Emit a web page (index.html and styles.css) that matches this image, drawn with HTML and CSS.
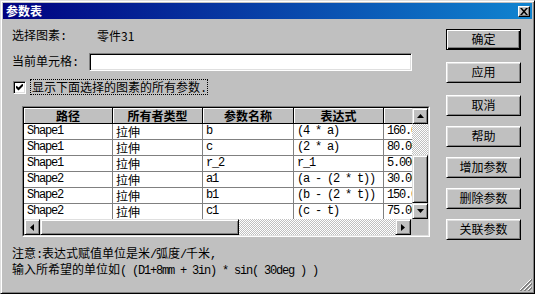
FILE: index.html
```html
<!DOCTYPE html>
<html lang="zh-CN">
<head>
<meta charset="utf-8">
<title>参数表</title>
<link rel="stylesheet" href="styles.css">
</head>
<body>
<div class="window">
  <div class="titlebar">
    <span class="title">参数表</span>
    <span class="close"><svg width="8" height="7" viewBox="0 0 8 7"><path d="M0 0H2L4 2.3L6 0H8L5 3.5L8 7H6L4 4.7L2 7H0L3 3.5Z" fill="#000"/></svg></span>
  </div>
  <div class="content">
    <div class="main">
      <div class="row r-sel"><span class="lbl w-sel">选择图素<span class="m">:</span></span><span>零件31</span></div>
      <div class="row r-cell"><span class="lbl w-cell">当前单元格<span class="m">:</span></span><div class="field"></div></div>
      <div class="row r-chk">
        <span class="checkbox"><svg width="7" height="7" viewBox="0 0 7 7"><path d="M0 2.5L2.5 5L7 0.5" stroke="#000" stroke-width="2" fill="none"/></svg></span>
        <span class="focus">显示下面选择的图素的所有参数<span class="m">.</span></span>
      </div>
      <div class="grid">
        <div class="grid-in">
          <div class="grid-body">
            <div class="cells">
              <div class="trow thead"><div>路径</div><div>所有者类型</div><div>参数名称</div><div>表达式</div><div></div></div>
              <div class="trow"><div class="m">Shape1</div><div>拉伸</div><div class="m">b</div><div class="m">(4 * a)</div><div class="m">160.000</div></div>
              <div class="trow"><div class="m">Shape1</div><div>拉伸</div><div class="m">c</div><div class="m">(2 * a)</div><div class="m">80.000</div></div>
              <div class="trow"><div class="m">Shape1</div><div>拉伸</div><div class="m">r_2</div><div class="m">r_1</div><div class="m">5.000</div></div>
              <div class="trow"><div class="m">Shape2</div><div>拉伸</div><div class="m">a1</div><div class="m">(a - (2 * t))</div><div class="m">30.000</div></div>
              <div class="trow"><div class="m">Shape2</div><div>拉伸</div><div class="m">b1</div><div class="m">(b - (2 * t))</div><div class="m">150.000</div></div>
              <div class="trow"><div class="m">Shape2</div><div>拉伸</div><div class="m">c1</div><div class="m">(c - t)</div><div class="m">75.000</div></div>
            </div>
            <div class="vscroll">
              <span class="sbtn"><svg width="7" height="4" viewBox="0 0 7 4"><path d="M3.5 0L7 4H0Z" fill="#000"/></svg></span>
              <span class="track vtrack"></span>
              <span class="thumb vthumb"></span>
              <span class="sbtn"><svg width="7" height="4" viewBox="0 0 7 4"><path d="M0 0H7L3.5 4Z" fill="#000"/></svg></span>
            </div>
          </div>
          <div class="hrow">
            <div class="hscroll">
              <span class="sbtn"><svg width="4" height="7" viewBox="0 0 4 7"><path d="M4 0V7L0 3.5Z" fill="#000"/></svg></span>
              <span class="thumb hthumb"></span>
              <span class="track htrack"></span>
              <span class="sbtn"><svg width="4" height="7" viewBox="0 0 4 7"><path d="M0 0V7L4 3.5Z" fill="#000"/></svg></span>
            </div>
            <div class="corner"></div>
          </div>
        </div>
      </div>
      <div class="note">
        <div>注意<span class="m">:</span>表达式赋值单位是米<span class="m">/</span>弧度<span class="m">/</span>千米<span class="m">,</span></div>
        <div>输入所希望的单位如<span class="m">( (D1+8mm + 3in) * sin( 30deg ) )</span></div>
      </div>
    </div>
    <div class="buttons">
      <div class="btn default">确定</div>
      <div class="btn">应用</div>
      <div class="btn">取消</div>
      <div class="btn gap2">帮助</div>
      <div class="btn gap2">增加参数</div>
      <div class="btn gap2">删除参数</div>
      <div class="btn gap2">关联参数</div>
    </div>
  </div>
  <div class="grip"><svg width="12" height="12" viewBox="0 0 12 12">
    <path d="M11 0L0 11M11 4L4 11M11 8L8 11" stroke="#fff" stroke-width="1"/>
    <path d="M12 0L0 12M12 1L1 12M12 4L4 12M12 5L5 12M12 8L8 12M12 9L9 12" stroke="#808080" stroke-width="1"/>
  </svg></div>
</div>
</body>
</html>
```
FILE: styles.css
```css
* { box-sizing: border-box; }
html, body { margin: 0; padding: 0; }
body {
  width: 535px; height: 294px; overflow: hidden;
  background: #c0c0c0;
  font: 12px/15px "Noto Sans CJK SC", sans-serif;
  color: #000;
}
.m { font-family: "Liberation Mono", monospace; font-size: 12px; letter-spacing: -1.2px; }

.window {
  position: relative;
  width: 535px; height: 294px;
  background: #c0c0c0;
  border: 1px solid;
  border-color: #dfdfdf #000 #000 #dfdfdf;
  box-shadow: inset 1px 1px #fff, inset -1px -1px #808080;
  padding: 2px;
  display: flex; flex-direction: column;
}
.titlebar {
  height: 16px;
  background: linear-gradient(to right, #000080, #1084d0);
  display: flex; align-items: center; justify-content: space-between;
  padding: 0 2px 0 3px;
}
.title { color: #fff; font-weight: 700; font-size: 12px; line-height: 16px; }
.close {
  width: 12px; height: 11px;
  background: #c0c0c0;
  border: 1px solid; border-color: #fff #000 #000 #fff;
  box-shadow: inset -1px -1px #808080;
  display: flex; align-items: center; justify-content: center;
}

.content { flex: 1; display: flex; padding: 9px 11px 0 9px; }
.main { flex: 1; display: flex; flex-direction: column; }

.row { display: flex; align-items: center; }
.r-sel { height: 15px; }
.w-sel { width: 85px; }
.r-cell { height: 18px; margin-top: 10px; }
.w-cell { width: 77px; }
.field {
  width: 323px; height: 18px; background: #fff;
  border: 1px solid; border-color: #808080 #fff #fff #808080;
  box-shadow: inset 1px 1px #000, inset -1px -1px #dfdfdf;
}
.r-chk { height: 16px; margin-top: 8px; }
.checkbox {
  width: 13px; height: 13px; margin-left: 1px;
  background: #fff;
  border: 1px solid; border-color: #808080 #fff #fff #808080;
  box-shadow: inset 1px 1px #000, inset -1px -1px #dfdfdf;
  display: flex; align-items: center; justify-content: center;
}
.focus {
  margin-left: 4px; height: 16px; padding: 0 1px;
  border: 1px dotted #000;
  line-height: 14px;
}

.grid {
  margin-top: 11px; margin-left: 10px;
  width: 408px; height: 131px;
  border: 1px solid; border-color: #808080 #fff #fff #808080;
}
.grid-in {
  height: 100%;
  border: 1px solid; border-color: #000 #dfdfdf #dfdfdf #000;
  display: flex; flex-direction: column;
  background: #c0c0c0;
}
.grid-body { flex: 1; display: flex; min-height: 0; }
.cells { width: 388px; overflow: hidden; background: #c0c0c0; }
.trow { display: grid; grid-template-columns: 89px 90px 91px 90px 85px; height: 16px; }
.trow > div {
  background: #fff;
  border-right: 1px solid #808080; border-bottom: 1px solid #808080;
  padding-left: 3px; white-space: nowrap; overflow: hidden;
  line-height: 15px;
}
.thead > div {
  background: #c0c0c0;
  border-color: #000;
  box-shadow: inset 1px 1px #fff;
  font-weight: 700; text-align: center; padding-left: 0;
}

.vscroll { width: 16px; display: flex; flex-direction: column; }
.sbtn {
  width: 16px; height: 16px; flex: none;
  background: #c0c0c0;
  border: 1px solid; border-color: #dfdfdf #000 #000 #dfdfdf;
  box-shadow: inset 1px 1px #fff, inset -1px -1px #808080;
  display: flex; align-items: center; justify-content: center;
}
.track { background: repeating-conic-gradient(#c0c0c0 0 25%, #fff 0 50%) 0 0 / 2px 2px; }
.vtrack { height: 31px; flex: none; }
.thumb {
  background: #c0c0c0;
  border: 1px solid; border-color: #dfdfdf #000 #000 #dfdfdf;
  box-shadow: inset 1px 1px #fff, inset -1px -1px #808080;
}
.vthumb { flex: 1; }
.hrow { height: 16px; display: flex; flex: none; }
.hscroll { width: 387px; display: flex; }
.hthumb { width: 199px; flex: none; }
.htrack { flex: 1; }
.corner { flex: 1; background: #c0c0c0; }

.note { margin-top: 9px; line-height: 13px; }

.buttons { width: 75px; display: flex; flex-direction: column; padding-top: 1px; }
.btn {
  width: 75px; height: 21px; flex: none;
  border: 1px solid; border-color: #fff #000 #000 #fff;
  box-shadow: inset 1px 1px #dfdfdf, inset -1px -1px #808080;
  text-align: center; line-height: 18px;
  margin-bottom: 12px;
}
.btn.gap2 { margin-bottom: 10px; }
.btn:nth-child(3) { margin-bottom: 10px; }
.btn.default {
  border-color: #000;
  box-shadow: inset 1px 1px #fff, inset -1px -1px #000, inset -2px -2px #808080;
}

.grip { position: absolute; right: 2px; bottom: 2px; width: 12px; height: 12px; line-height: 0; }
```
